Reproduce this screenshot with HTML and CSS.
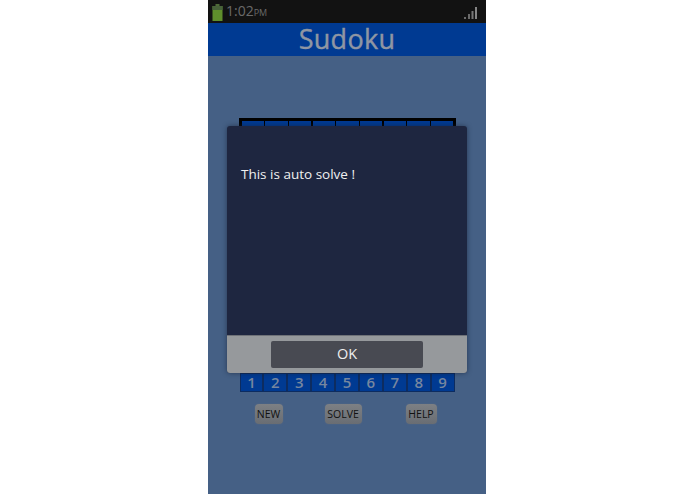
FILE: index.html
```html
<!DOCTYPE html>
<html lang="en">
<head>
<meta charset="utf-8">
<title>Sudoku</title>
<link rel="stylesheet" href="styles.css">
</head>
<body>
<div class="phone">
  <div class="status">
    <svg class="battery" width="11" height="17" viewBox="0 0 11 17"><rect x="3.5" y="0" width="4" height="2" fill="#4f6a38"/><rect x="0.5" y="2" width="10" height="15" fill="#5f8f2c"/><rect x="0.5" y="2" width="10" height="4" fill="#48623a"/></svg>
    <span class="time">1:02<small>PM</small></span>
    <svg class="signal" width="13" height="12" viewBox="0 0 13 12"><rect x="0" y="10" width="2" height="2" fill="#6a6a6a"/><rect x="4" y="7" width="2" height="5" fill="#6a6a6a"/><rect x="7.5" y="4" width="2" height="8" fill="#777"/><rect x="11" y="0" width="2" height="12" fill="#858585"/></svg>
  </div>
  <div class="title">Sudoku</div>
  <main class="game">
    <div class="board">
      <div class="cell"></div><div class="cell"></div><div class="cell gap"></div>
      <div class="cell"></div><div class="cell"></div><div class="cell gap"></div>
      <div class="cell"></div><div class="cell"></div><div class="cell"></div>
    </div>
    <div class="keys">
      <div class="key">1</div><div class="key">2</div><div class="key">3</div>
      <div class="key">4</div><div class="key">5</div><div class="key">6</div>
      <div class="key">7</div><div class="key">8</div><div class="key">9</div>
    </div>
    <div class="actions">
      <div class="action new">NEW</div>
      <div class="action solve">SOLVE</div>
      <div class="action help">HELP</div>
    </div>
  </main>
  <div class="dialog">
    <div class="message">This is auto solve !</div>
    <div class="footer"><div class="ok">OK</div></div>
  </div>
</div>
</body>
</html>
```
FILE: styles.css
```css
* { box-sizing: border-box; }
html, body { margin: 0; height: 100%; background: #fff; }
body { display: flex; justify-content: center; font-family: "Open Sans", "Noto Sans", sans-serif; }
.phone { position: relative; width: 278px; height: 494px; margin-right: 1px; background: #456085; overflow: hidden; display: flex; flex-direction: column; }
.status { height: 23px; background: #121212; display: flex; align-items: center; padding: 1px 9px 0 4px; color: #6a6a6a; }
.battery { display: block; }
.time { margin-left: 3px; font-size: 14px; line-height: 20px; }
.time small { font-size: 9px; }
.signal { margin-left: auto; margin-top: 2px; }
.title { height: 33px; background: #003a92; color: #8f96a3; font-size: 27px; -webkit-text-stroke: 0.4px #8f96a3; letter-spacing: 0.3px; line-height: 32px; text-align: center; }
.game { flex: 1; display: flex; flex-direction: column; align-items: center; padding-top: 62px; }
.board { width: 217px; height: 255px; margin-left: 1px; background: #000; display: flex; padding: 3px 3px 0; gap: 1px; align-items: flex-start; }
.cell { flex: 1; height: 20px; background: #003a92; }
.cell.gap { margin-right: 1px; }
.keys { display: flex; width: 215px; height: 19px; }
.key { flex: 1; background: #003a92; border: 1px solid #0d2c60; color: #76869f; font-size: 15px; font-weight: 600; line-height: 17px; text-align: center; }
.actions { position: relative; display: flex; width: 215px; height: 20px; margin-top: 12px; padding-left: 15px; }
.action { height: 20px; background: linear-gradient(#7d8084, #696d73); border-radius: 4px; color: #111; font-size: 10.5px; line-height: 20px; text-align: center; box-shadow: 0 0 2px #5a6a80; }
.new { width: 28px; margin-right: 42px; }
.solve { width: 37px; margin-right: 44px; }
.help { width: 31px; }
.dialog { position: absolute; left: 19px; top: 126px; width: 240px; height: 247px; background: #1e2640; border-radius: 3px; box-shadow: 0 0 5px rgba(20, 30, 50, .6); display: flex; flex-direction: column; overflow: hidden; }
.message { flex: 1; padding: 38px 14px 0; color: #f0f0f0; font-size: 13.5px; line-height: 20px; }
.footer { height: 38px; background: #96999c; border-top: 1px solid #6f7278; display: flex; justify-content: center; padding-top: 5px; }
.ok { width: 152px; height: 27px; background: #484a52; border-radius: 2px; color: #eee; font-size: 14.5px; line-height: 25px; text-align: center; }
```
